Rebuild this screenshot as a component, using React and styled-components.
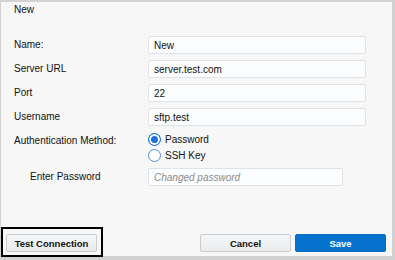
import React from "react";
import styled, { createGlobalStyle } from "styled-components";

const Global = createGlobalStyle`
  html, body { margin: 0; padding: 0; }
  body { font-family: "Liberation Sans", Arial, sans-serif; }
`;

const Frame = styled.div`
  width: 395px;
  height: 260px;
  box-sizing: border-box;
  background: #d2d2d2;
  padding: 2px 3px 4px 1px;
`;

const Panel = styled.div`
  height: 100%;
  box-sizing: border-box;
  background: #f7f7f7;
  display: flex;
  flex-direction: column;
  color: #111111;
  font-size: 10px;
`;

const Title = styled.div`
  padding: 2px 0 0 13px;
  line-height: 12px;
  height: 32px;
`;

const Form = styled.div`
  display: grid;
  grid-template-columns: 134px 1fr;
  row-gap: 6px;
  padding: 0 25px 0 13px;
  align-items: center;
`;

const Label = styled.div`
  line-height: 12px;
  padding-left: ${(p) => (p.$indent ? "16px" : "0")};
`;

const Input = styled.input`
  box-sizing: border-box;
  height: 18px;
  width: ${(p) => p.$w || "218px"};
  border: 1px solid #dfe3e7;
  border-radius: 2px;
  background: #fcfdfe;
  padding: 0 5px;
  font-family: "Liberation Sans", Arial, sans-serif;
  font-size: 10px;
  color: #111111;
  outline: none;
  &::placeholder {
    color: #8a8a8a;
    font-style: italic;
  }
`;

const AuthLabel = styled(Label)`
  align-self: start;
  padding-top: 3px;
`;

const Radios = styled.div`
  display: flex;
  flex-direction: column;
  gap: 3px;
  margin-top: 1px;
`;

const RadioRow = styled.label`
  display: flex;
  align-items: center;
  gap: 4px;
  line-height: 12px;
`;

const Dot = styled.span`
  width: 13px;
  height: 13px;
  box-sizing: border-box;
  border-radius: 50%;
  border: 1px solid ${(p) => (p.$on ? "#1a73d9" : "#4a90d9")};
  background: ${(p) => (p.$on ? "#1a73d9" : "#ffffff")};
  box-shadow: ${(p) => (p.$on ? "inset 0 0 0 2px #ffffff" : "none")};
  flex: none;
`;

const Spacer = styled.div`
  flex: 1;
`;

const Footer = styled.div`
  display: flex;
  align-items: flex-start;
  height: 29px;
  padding-right: 6px;
`;

const Focus = styled.div`
  border: 2px solid #000;
  padding: 5px 4px 3px 3px;
`;

const Button = styled.button`
  box-sizing: border-box;
  height: 18px;
  width: ${(p) => p.$w};
  margin-top: ${(p) => p.$mt || "0"};
  margin-left: ${(p) => p.$ml || "0"};
  border-radius: 2px;
  font-family: "Liberation Sans", Arial, sans-serif;
  font-weight: bold;
  font-size: 9.5px;
  padding: 0;
  border: 1px solid ${(p) => (p.$primary ? "#0b6ac2" : "#c9cdd1")};
  color: ${(p) => (p.$primary ? "#ffffff" : "#111111")};
  background: ${(p) =>
    p.$primary
      ? "#0572ce"
      : "linear-gradient(#f5f6f7, #e9ebed)"};
`;

export default function App() {
  return (
    <>
      <Global />
      <Frame>
        <Panel>
          <Title>New</Title>
          <Form>
            <Label>Name:</Label>
            <Input defaultValue="New" />
            <Label>Server URL</Label>
            <Input defaultValue="server.test.com" />
            <Label>Port</Label>
            <Input defaultValue="22" />
            <Label>Username</Label>
            <Input defaultValue="sftp.test" />
            <AuthLabel>Authentication Method:</AuthLabel>
            <Radios>
              <RadioRow>
                <Dot $on />
                Password
              </RadioRow>
              <RadioRow>
                <Dot />
                SSH Key
              </RadioRow>
            </Radios>
            <Label $indent>Enter Password</Label>
            <Input $w="195px" placeholder="Changed password" />
          </Form>
          <Spacer />
          <Footer>
            <Focus>
              <Button $w="91px">Test Connection</Button>
            </Focus>
            <Spacer />
            <Button $w="91px" $mt="7px">Cancel</Button>
            <Button $w="91px" $mt="7px" $ml="4px" $primary>
              Save
            </Button>
          </Footer>
        </Panel>
      </Frame>
    </>
  );
}
